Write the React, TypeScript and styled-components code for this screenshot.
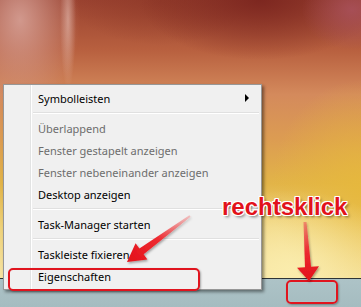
import styled, { createGlobalStyle } from "styled-components";

const GlobalStyle = createGlobalStyle`
    html, body {
        margin: 0;
        padding: 0;
    }
    body {
        font-family: "Noto Sans", "DejaVu Sans", sans-serif;
    }
`;

type Entry =
    | { kind: "item"; label: string; disabled?: boolean; submenu?: boolean }
    | { kind: "separator" };

const entries: Entry[] = [
    { kind: "item", label: "Symbolleisten", submenu: true },
    { kind: "separator" },
    { kind: "item", label: "Überlappend", disabled: true },
    { kind: "item", label: "Fenster gestapelt anzeigen", disabled: true },
    { kind: "item", label: "Fenster nebeneinander anzeigen", disabled: true },
    { kind: "item", label: "Desktop anzeigen" },
    { kind: "separator" },
    { kind: "item", label: "Task-Manager starten" },
    { kind: "separator" },
    { kind: "item", label: "Taskleiste fixieren" },
    { kind: "item", label: "Eigenschaften" },
];

const App = () => {
    return (
        <>
            <GlobalStyle />
            <Screen>
                <Wallpaper />
                <Taskbar />

                <ContextMenu>
                    {entries.map((entry, i) =>
                        entry.kind === "separator" ? (
                            <Separator key={i} />
                        ) : (
                            <MenuItem key={i} $disabled={entry.disabled}>
                                <span>{entry.label}</span>
                                {entry.submenu && <SubmenuArrow />}
                            </MenuItem>
                        )
                    )}
                </ContextMenu>

                <Callout $left={8} $top={268} $width={192} $height={23} />
                <Callout $left={286} $top={280} $width={52} $height={24} />

                <Arrows viewBox="0 0 361 307" width={361} height={307}>
                    <defs>
                        <linearGradient id="diag" x1="190" y1="216" x2="127" y2="262" gradientUnits="userSpaceOnUse">
                            <stop offset="0" stopColor="#f47a7a" stopOpacity="0.4" />
                            <stop offset="0.5" stopColor="#ee2a30" />
                            <stop offset="1" stopColor="#e3101a" />
                        </linearGradient>
                        <linearGradient id="vert" x1="305" y1="222" x2="309" y2="281" gradientUnits="userSpaceOnUse">
                            <stop offset="0" stopColor="#f05a5a" stopOpacity="0.6" />
                            <stop offset="0.5" stopColor="#ec2a30" />
                            <stop offset="1" stopColor="#e3101a" />
                        </linearGradient>
                        <filter id="soft" x="-20%" y="-20%" width="140%" height="140%">
                            <feDropShadow dx="1" dy="1.5" stdDeviation="1" floodColor="#000" floodOpacity="0.35" />
                        </filter>
                    </defs>
                    <polygon
                        filter="url(#soft)"
                        fill="url(#diag)"
                        points="190.6,216.8 143.6,254.2 147.4,259.5 127,262 135.6,243.3 139.4,248.6 189.4,215.2"
                    />
                    <polygon
                        filter="url(#soft)"
                        fill="url(#vert)"
                        points="306.5,221.9 311,266.8 319,266.3 309,281 297,267.7 305,267.2 303.5,222.1"
                    />
                </Arrows>

                <Annotation>rechtsklick</Annotation>
            </Screen>
        </>
    );
};

const Screen = styled.div`
    position: relative;
    width: 361px;
    height: 307px;
    overflow: hidden;

    display: flex;
    flex-direction: column;
`;

const Wallpaper = styled.div`
    flex: 1;
    background:
        radial-gradient(ellipse 8px 70px at 68px 20px, rgba(235, 200, 190, 0.55), rgba(235, 200, 190, 0) 100%),
        radial-gradient(ellipse 60px 90px at 20px 20px, rgba(214, 160, 150, 0.9), rgba(214, 160, 150, 0) 100%),
        radial-gradient(ellipse 50px 40px at 352px 10px, rgba(168, 80, 90, 0.9), rgba(168, 80, 90, 0) 100%),
        radial-gradient(ellipse 120px 60px at 260px 0px, rgba(122, 36, 30, 0.9), rgba(122, 36, 30, 0) 100%),
        radial-gradient(ellipse 90px 45px at 160px 0px, rgba(140, 54, 38, 0.6), rgba(140, 54, 38, 0) 100%),
        radial-gradient(ellipse 120px 80px at 290px 270px, rgba(250, 236, 172, 1), rgba(250, 236, 172, 0) 100%),
        radial-gradient(ellipse 90px 110px at 361px 190px, rgba(230, 184, 60, 0.9), rgba(230, 184, 60, 0) 100%),
        linear-gradient(to bottom, #9a4230 0%, #b8603f 18%, #d48a5c 34%, #dc9c52 50%, #e2b448 66%, #efd27a 82%, #f6e3a2 100%);
`;

const Taskbar = styled.div`
    height: 28px;
    border-top: 1px solid #2e3436;
    background: linear-gradient(to bottom, #adc3c7, #a5bcc0);
`;

const ContextMenu = styled.div`
    position: absolute;
    left: 3px;
    top: 84px;
    width: 259px;
    box-sizing: border-box;
    padding: 2px;

    border: 1px solid #979797;
    background-color: #f0f0f0;
    background-image: linear-gradient(
        to right,
        transparent 26px,
        #e2e3e3 26px,
        #e2e3e3 27px,
        #ffffff 27px,
        #ffffff 28px,
        transparent 28px
    );
    box-shadow: 2px 2px 3px rgba(0, 0, 0, 0.45);

    font-family: "Noto Sans", "DejaVu Sans", sans-serif;
    font-size: 11px;
`;

const MenuItem = styled.div<{ $disabled?: boolean }>`
    height: 22px;
    padding-left: 32px;
    padding-right: 10px;

    display: flex;
    align-items: center;
    justify-content: space-between;

    color: ${(p) => (p.$disabled ? "#6d6d6d" : "#000000")};
    white-space: nowrap;
`;

const SubmenuArrow = styled.span`
    width: 0;
    height: 0;
    border-top: 4px solid transparent;
    border-bottom: 4px solid transparent;
    border-left: 4px solid #000;
`;

const Separator = styled.div`
    height: 8px;
    display: flex;
    align-items: center;

    &::after {
        content: "";
        flex: 1;
        margin-left: 27px;
        height: 1px;
        background: #e0e0e0;
        border-bottom: 1px solid #ffffff;
    }
`;

const Callout = styled.div<{ $left: number; $top: number; $width: number; $height: number }>`
    position: absolute;
    left: ${(p) => p.$left}px;
    top: ${(p) => p.$top}px;
    width: ${(p) => p.$width}px;
    height: ${(p) => p.$height}px;
    box-sizing: border-box;

    border: 2px solid #e0141e;
    border-radius: 5px;
    box-shadow: 1px 1px 2px rgba(0, 0, 0, 0.3), inset 0 0 1px rgba(255, 255, 255, 0.6);
`;

const Arrows = styled.svg`
    position: absolute;
    left: 0;
    top: 0;
    pointer-events: none;
`;

const Annotation = styled.div`
    position: absolute;
    left: 222px;
    top: 195px;

    font-family: "Liberation Sans", Arial, sans-serif;
    font-weight: bold;
    font-size: 24px;
    line-height: 24px;
    color: #e2121b;
    text-shadow:
        1px 0 #fff, -1px 0 #fff, 0 1px #fff, 0 -1px #fff,
        1px 1px #fff, -1px -1px #fff, 1px -1px #fff, -1px 1px #fff,
        2px 2px 3px rgba(0, 0, 0, 0.55);
`;

export default App;
